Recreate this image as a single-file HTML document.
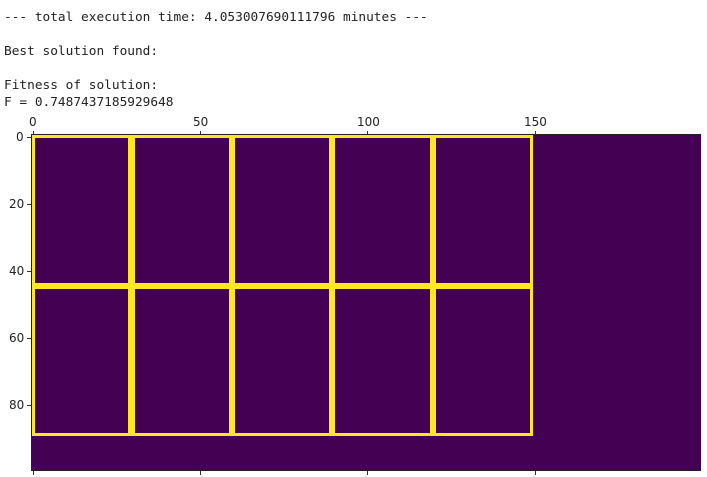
<!DOCTYPE html>
<html><head><meta charset="utf-8">
<style>
body{margin:0;width:707px;height:477px;background:#fff;position:relative;overflow:hidden;font-family:"DejaVu Sans Mono","Liberation Mono",monospace;}
.t{position:absolute;left:4px;font-size:12.8px;color:#222;white-space:pre;line-height:17px;}
.a{position:absolute;background:#440154;}
.y{position:absolute;background:#fde725;}
.k{position:absolute;background:#333;}
.l{position:absolute;font-family:"DejaVu Sans","Liberation Sans",sans-serif;font-size:12px;color:#222;}
</style></head><body>
<div class="t" style="top:9px">--- total execution time: 4.053007690111796 minutes ---</div>
<div class="t" style="top:43px">Best solution found:</div>
<div class="t" style="top:77px">Fitness of solution:</div>
<div class="t" style="top:94px">F = 0.7487437185929648</div>

<div class="k" style="left:31px;top:134px;width:670px;height:337px;background:#222"></div>
<div class="a" style="left:32px;top:135px;width:669px;height:335px"></div>

<div class="y" style="left:32px;top:135px;width:501px;height:3px"></div>
<div class="y" style="left:32px;top:283px;width:501px;height:6px"></div>
<div class="y" style="left:32px;top:433px;width:501px;height:3px"></div>
<div class="y" style="left:32px;top:135px;width:3px;height:301px"></div>
<div class="y" style="left:128px;top:135px;width:7px;height:301px"></div>
<div class="y" style="left:229px;top:135px;width:6px;height:301px"></div>
<div class="y" style="left:329px;top:135px;width:6px;height:301px"></div>
<div class="y" style="left:430px;top:135px;width:6px;height:301px"></div>
<div class="y" style="left:530px;top:135px;width:3px;height:301px"></div>

<div class="k" style="left:33px;top:131px;width:1px;height:4px"></div>
<div class="k" style="left:200px;top:131px;width:1px;height:4px"></div>
<div class="k" style="left:367px;top:131px;width:1px;height:4px"></div>
<div class="k" style="left:535px;top:131px;width:1px;height:4px"></div>
<div class="l" style="left:29px;top:115px">0</div>
<div class="l" style="left:193px;top:115px">50</div>
<div class="l" style="left:357px;top:115px">100</div>
<div class="l" style="left:524px;top:115px">150</div>
<div class="k" style="left:33px;top:471px;width:1px;height:4px"></div>
<div class="k" style="left:200px;top:471px;width:1px;height:4px"></div>
<div class="k" style="left:367px;top:471px;width:1px;height:4px"></div>
<div class="k" style="left:535px;top:471px;width:1px;height:4px"></div>
<div class="k" style="left:27px;top:137px;width:4px;height:1px"></div>
<div class="k" style="left:27px;top:204px;width:4px;height:1px"></div>
<div class="k" style="left:27px;top:271px;width:4px;height:1px"></div>
<div class="k" style="left:27px;top:338px;width:4px;height:1px"></div>
<div class="k" style="left:27px;top:405px;width:4px;height:1px"></div>
<div class="l" style="left:16px;top:130px">0</div>
<div class="l" style="left:9px;top:197px">20</div>
<div class="l" style="left:9px;top:264px">40</div>
<div class="l" style="left:9px;top:331px">60</div>
<div class="l" style="left:9px;top:398px">80</div>
</body></html>
